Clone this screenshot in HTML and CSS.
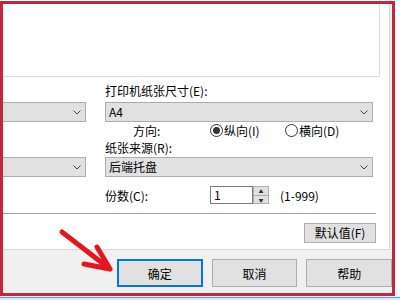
FILE: index.html
```html
<!DOCTYPE html>
<html lang="zh-CN">
<head>
<meta charset="UTF-8" />
<title>打印机属性</title>
<link rel="stylesheet" href="styles.css">
</head>
<body>
  <div class="screen">
    <div class="dialog">
      <div class="page">
        <div class="preview"></div>

        <div class="form">
          <!-- 左侧（被裁切的）下拉框 -->
          <div class="col-left">
            <div class="combo"><span class="val"></span><svg class="chev" viewBox="0 0 8 5"><polyline points="0.5,0.5 4,4 7.5,0.5" /></svg></div>
            <div class="combo combo-low"><span class="val"></span><svg class="chev" viewBox="0 0 8 5"><polyline points="0.5,0.5 4,4 7.5,0.5" /></svg></div>
          </div>

          <!-- 右侧：纸张设置 -->
          <div class="col-right">
            <div class="lbl">打印机纸张尺寸(E):</div>
            <div class="combo"><span class="val">A4</span><svg class="chev" viewBox="0 0 8 5"><polyline points="0.5,0.5 4,4 7.5,0.5" /></svg></div>
            <div class="orient">
              <span class="orient-lbl">方向:</span>
              <span class="radio radio-first"><span class="dot on"></span>纵向(I)</span>
              <span class="radio"><span class="dot"></span>横向(D)</span>
            </div>
            <div class="lbl lbl-src">纸张来源(R):</div>
            <div class="combo"><span class="val">后端托盘</span><svg class="chev" viewBox="0 0 8 5"><polyline points="0.5,0.5 4,4 7.5,0.5" /></svg></div>
            <div class="count">
              <span class="count-lbl">份数(C):</span>
              <span class="spin">
                <span class="spin-box">1</span>
                <span class="spin-btns">
                  <span class="spin-up">▲</span>
                  <span class="spin-down">▼</span>
                </span>
              </span>
              <span class="range">(1-999)</span>
            </div>
          </div>
        </div>

        <div class="sep"></div>
        <div class="defaults"><button class="btn btn-small">默认值(F)</button></div>
      </div>

      <div class="actions">
        <button class="btn btn-ok">确定</button>
        <button class="btn">取消</button>
        <button class="btn">帮助</button>
      </div>
    </div>
    <div class="taskbar"></div>

    <!-- 标注：红框 + 箭头 -->
    <div class="mark"></div>
    <svg class="arrow" viewBox="0 0 400 300">
      <path d="M62 232 L110 269 M97 247 L110 269 L84 264" />
    </svg>
  </div>
</body>
</html>
```

FILE: styles.css
```css
/* ---------- Base ---------- */
* { box-sizing: border-box; }
body {
  margin: 0;
  font-family: "Noto Sans CJK SC", "Liberation Sans", sans-serif;
  font-size: 12px;
  color: #000;
  background: #fff;
}
.screen {
  position: relative;
  width: 400px;
  height: 300px;
  overflow: hidden;
  background: #fff;
}

/* ---------- Dialog ---------- */
.dialog {
  width: 392px;
  height: 296px;
  background: #f0f0f0;
}
.page {
  width: 390px;
  height: 250px;
  background: #fff;
  border-right: 1px solid #d9d9d9;
  border-bottom: 1px solid #d9d9d9;
}
.preview {
  width: 380px;
  height: 77px;
  border-right: 1px solid #dcdcdc;
  border-bottom: 1px solid #dcdcdc;
}

/* ---------- Form ---------- */
.form { display: flex; gap: 19px; }
.col-left {
  width: 86px;
  padding-top: 25px;
  display: flex;
  flex-direction: column;
}
.col-left .combo { border-left: 0; }
.combo-low { margin-top: 35px; }
.col-right { width: 268px; display: flex; flex-direction: column; }

.lbl { margin-top: 6px; height: 16px; line-height: 16px; white-space: nowrap; }
.lbl-src { margin-top: 0; height: 18px; line-height: 18px; }

.combo {
  height: 20px;
  display: flex;
  align-items: center;
  justify-content: space-between;
  background: #e1e1e1;
  border: 1px solid #adadad;
  padding: 0 4px 0 3px;
}
.col-right .combo { margin-top: 3px; }
.col-right .combo + .count { margin-top: 9px; }
.lbl-src + .combo { margin-top: 0; }
.val { line-height: 18px; }
.chev { width: 8px; height: 5px; }
.chev polyline { fill: none; stroke: #444; stroke-width: 1; }

.orient {
  height: 17px;
  display: flex;
  align-items: center;
  padding-left: 28px;
}
.orient-lbl { width: 77px; }
.radio { display: flex; align-items: center; gap: 1px; }
.radio-first { width: 75px; }
.dot {
  width: 13px;
  height: 13px;
  border: 1px solid #333;
  border-radius: 50%;
  background: #fff;
  display: flex;
  align-items: center;
  justify-content: center;
}
.dot.on::after {
  content: "";
  width: 7px;
  height: 7px;
  border-radius: 50%;
  background: #333;
}

.count { height: 18px; display: flex; align-items: center; }
.count-lbl { width: 105px; }
.spin { display: flex; height: 18px; }
.spin-box {
  width: 43px;
  border: 1px solid #7a7a7a;
  padding-left: 3px;
  line-height: 16px;
}
.spin-btns {
  width: 16px;
  display: flex;
  flex-direction: column;
  border: 1px solid #adadad;
  background: #e1e1e1;
}
.spin-up, .spin-down {
  flex: 1;
  font-size: 5px;
  line-height: 8px;
  text-align: center;
  color: #333;
}
.spin-up { border-bottom: 1px solid #adadad; }
.range { margin-left: 11px; }

.sep { margin-top: 9px; width: 376px; height: 1px; background: #a0a0a0; }
.defaults { width: 376px; display: flex; justify-content: flex-end; margin-top: 9px; }

/* ---------- Buttons ---------- */
.btn {
  font: inherit;
  color: #000;
  background: #e1e1e1;
  border: 1px solid #adadad;
  width: 86px;
  height: 28px;
  padding: 0;
}
.btn-small { width: 72px; height: 20px; line-height: 18px; }
.btn-ok { border: 2px solid #0078d7; }
.actions {
  display: flex;
  gap: 9px;
  padding: 9px 0 0 117px;
}

.taskbar {
  height: 4px;
  border-top: 1px solid #f0f0f0;
  border-bottom: 2px solid #dde8f4;
  background: #5b9bd5;
}

/* ---------- Annotation ---------- */
.mark {
  position: absolute;
  left: 0;
  top: 1px;
  width: 395px;
  height: 295px;
  border: 3px solid #c1283b;
}
.arrow {
  position: absolute;
  left: 0;
  top: 0;
  width: 400px;
  height: 300px;
  pointer-events: none;
}
.arrow path {
  fill: none;
  stroke: #e5161f;
  stroke-width: 5;
  stroke-linecap: round;
  stroke-linejoin: round;
}
```
